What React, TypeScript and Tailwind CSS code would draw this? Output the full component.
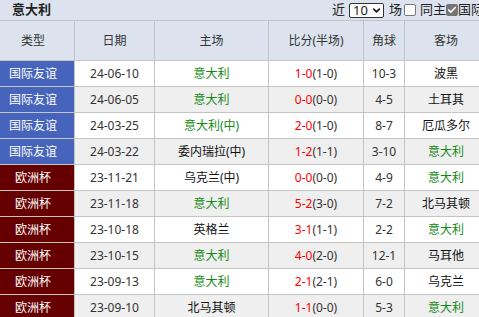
import { ChevronDown, Check } from "lucide-react";

type Row = {
  type: "friendly" | "euro";
  date: string;
  home: string;
  homeGreen?: boolean;
  score: string;
  half: string;
  corner: string;
  away: string;
  awayGreen?: boolean;
};

const rows: Row[] = [
  { type: "friendly", date: "24-06-10", home: "意大利", homeGreen: true, score: "1-0", half: "(1-0)", corner: "10-3", away: "波黑" },
  { type: "friendly", date: "24-06-05", home: "意大利", homeGreen: true, score: "0-0", half: "(0-0)", corner: "4-5", away: "土耳其" },
  { type: "friendly", date: "24-03-25", home: "意大利(中)", homeGreen: true, score: "2-0", half: "(1-0)", corner: "8-7", away: "厄瓜多尔" },
  { type: "friendly", date: "24-03-22", home: "委内瑞拉(中)", score: "1-2", half: "(1-1)", corner: "3-10", away: "意大利", awayGreen: true },
  { type: "euro", date: "23-11-21", home: "乌克兰(中)", score: "0-0", half: "(0-0)", corner: "4-9", away: "意大利", awayGreen: true },
  { type: "euro", date: "23-11-18", home: "意大利", homeGreen: true, score: "5-2", half: "(3-0)", corner: "7-2", away: "北马其顿" },
  { type: "euro", date: "23-10-18", home: "英格兰", score: "3-1", half: "(1-1)", corner: "2-2", away: "意大利", awayGreen: true },
  { type: "euro", date: "23-10-15", home: "意大利", homeGreen: true, score: "4-0", half: "(2-0)", corner: "12-1", away: "马耳他" },
  { type: "euro", date: "23-09-13", home: "意大利", homeGreen: true, score: "2-1", half: "(2-1)", corner: "6-0", away: "乌克兰" },
  { type: "euro", date: "23-09-10", home: "北马其顿", score: "1-1", half: "(0-0)", corner: "5-3", away: "意大利", awayGreen: true },
];

const headers = ["类型", "日期", "主场", "比分(半场)", "角球", "客场"];

export default function App() {
  return (
    <div
      className="w-[479px] h-[317px] overflow-hidden bg-white text-[12px] text-[#222]"
      style={{ fontFamily: '"Noto Sans", "Noto Sans CJK SC", sans-serif' }}
    >
      {/* Top bar */}
      <div className="flex items-center h-[20px] bg-[#dce3ee] whitespace-nowrap overflow-hidden">
        <span className="w-[332px] shrink-0 pl-[12px] font-bold text-[13px] text-[#222]">意大利</span>
        <span className="shrink-0 text-[13px]">近</span>
        <div className="shrink-0 ml-[4px] w-[35px] h-[15px] bg-white border border-[#333] rounded-[2px] flex items-center justify-between pl-[3px] pr-[1px] text-[13px] leading-none">
          <span>10</span>
          <ChevronDown className="w-[11px] h-[11px]" strokeWidth={4} />
        </div>
        <span className="shrink-0 ml-[5px] text-[13px]">场</span>
        <span className="shrink-0 ml-[2px] w-[12px] h-[12px] bg-white border border-[#777] rounded-[2px]" />
        <span className="shrink-0 ml-[4px] text-[13px]">同主</span>
        <span className="shrink-0 w-[12px] h-[12px] bg-[#757575] rounded-[2px] flex items-center justify-center">
          <Check className="w-[10px] h-[10px] text-white" strokeWidth={4} />
        </span>
        <span className="shrink-0 text-[13px]">国际友谊</span>
      </div>

      {/* Table */}
      <div className="grid grid-cols-[74px_79px_113px_94px_40px_82px] gap-px bg-[#c4c4c4] pt-px w-[486px]">
        {headers.map((h, i) => (
          <div
            key={h}
            className={`h-[39px] bg-[#dce3ee] flex items-center justify-center text-[#333] ${i === 0 ? "pr-[8px]" : ""}`}
          >
            {h}
          </div>
        ))}
        {rows.map((r, idx) => {
          const bg = idx % 2 === 0 ? "bg-white" : "bg-[#efefef]";
          return [
            <div
              key={`t${idx}`}
              className={`h-[25px] flex items-center justify-center pr-[8px] text-white ${r.type === "friendly" ? "bg-[#4664bb]" : "bg-[#660000]"}`}
            >
              {r.type === "friendly" ? "国际友谊" : "欧洲杯"}
            </div>,
            <div key={`d${idx}`} className={`h-[25px] flex items-center justify-center text-[#333] ${bg}`}>
              {r.date}
            </div>,
            <div
              key={`h${idx}`}
              className={`h-[25px] flex items-center justify-center ${bg} ${r.homeGreen ? "text-[#138a13]" : "text-[#111]"}`}
            >
              {r.home}
            </div>,
            <div key={`s${idx}`} className={`h-[25px] flex items-center justify-center ${bg}`}>
              <span className="text-[#ff0000]">{r.score}</span>
              <span className="text-[#333]">{r.half}</span>
            </div>,
            <div key={`c${idx}`} className={`h-[25px] flex items-center justify-center text-[#333] ${bg}`}>
              {r.corner}
            </div>,
            <div
              key={`a${idx}`}
              className={`h-[25px] flex items-center justify-center ${bg} ${r.awayGreen ? "text-[#138a13]" : "text-[#111]"}`}
            >
              {r.away}
            </div>,
          ];
        })}
      </div>
    </div>
  );
}
